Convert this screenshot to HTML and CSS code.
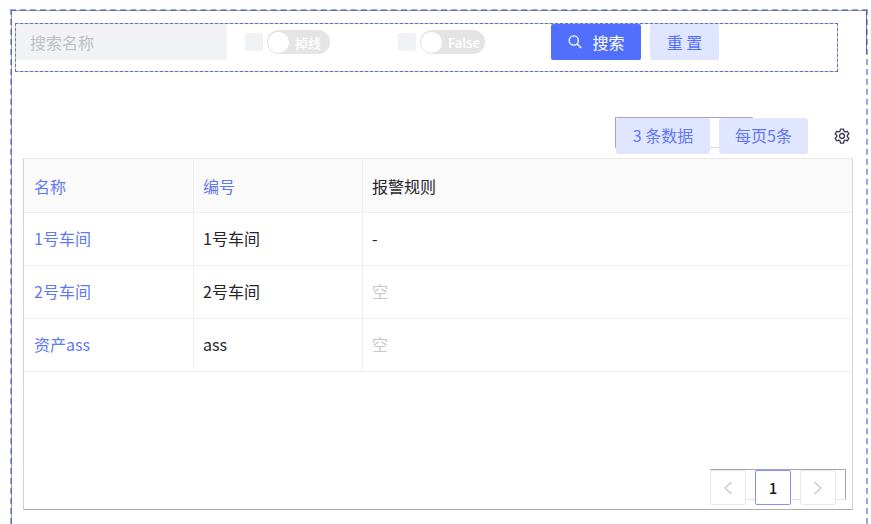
FILE: index.html
```html
<!DOCTYPE html>
<html lang="zh-CN">
<head>
    <meta charset="UTF-8">
    <title>资产列表</title>
    <link rel="stylesheet" href="styles.css">
</head>
<body>
    <div class="frame">
        <form class="filter">
            <input class="filter-input" type="text" placeholder="搜索名称">
            <div class="filter-toggle toggle-first">
                <span class="check"></span>
                <span class="switch"><i class="knob"></i><b>掉线</b></span>
            </div>
            <div class="filter-toggle toggle-second">
                <span class="check"></span>
                <span class="switch switch-wide"><i class="knob"></i><b>False</b></span>
            </div>
            <button class="btn btn-primary" type="button">
                <svg class="search-icon" viewBox="0 0 16 16" width="16" height="16">
                    <circle cx="6.8" cy="6.5" r="4.6" fill="none" stroke="#fff" stroke-width="1.3"/>
                    <path d="M10.2 10l4 4" fill="none" stroke="#fff" stroke-width="1.4"/>
                </svg>
                搜索
            </button>
            <button class="btn btn-light" type="button">重 置</button>
        </form>

        <div class="toolbar">
            <div class="chips">
                <span class="chip chip-count">3 条数据</span>
                <span class="chip chip-size">每页5条</span>
            </div>
            <svg class="gear" viewBox="0 0 24 24" width="18" height="18">
                <path d="M10 2.8h4l.6 2.8 1.8 1 2.7-.9 2 3.5-2.100 1.900v2l2.100 1.900-2 3.500-2.700-.9-1.800 1-.6 2.800h-4l-.6-2.800-1.800-1-2.700.9-2-3.500 2.100-1.900v-2L2.900 9.200l2-3.500 2.700.9 1.800-1z" fill="none" stroke="#3a3f55" stroke-width="1.800" stroke-linejoin="round"/>
                <circle cx="12" cy="12" r="3.300" fill="none" stroke="#3a3f55" stroke-width="1.800"/>
            </svg>
        </div>

        <div class="table-box">
            <table class="data-table" cellspacing="0">
                <thead>
                    <tr>
                        <th class="link">名称</th>
                        <th class="link">编号</th>
                        <th>报警规则</th>
                    </tr>
                </thead>
                <tbody>
                    <tr>
                        <td class="link">1号车间</td>
                        <td>1号车间</td>
                        <td>-</td>
                    </tr>
                    <tr>
                        <td class="link">2号车间</td>
                        <td>2号车间</td>
                        <td class="empty">空</td>
                    </tr>
                    <tr>
                        <td class="link">资产ass</td>
                        <td>ass</td>
                        <td class="empty">空</td>
                    </tr>
                </tbody>
            </table>
            <div class="pager">
                <span class="page-btn">
                    <svg viewBox="0 0 12 16" width="12" height="16"><path d="M9.500 2L3 8l6.500 6" fill="none" stroke="#c4c4c4" stroke-width="1.200"/></svg>
                </span>
                <span class="page-btn page-current">1</span>
                <span class="page-btn">
                    <svg viewBox="0 0 12 16" width="12" height="16"><path d="M2.500 2L9 8l-6.500 6" fill="none" stroke="#c4c4c4" stroke-width="1.200"/></svg>
                </span>
            </div>
        </div>
    </div>
</body>
</html>
```

FILE: styles.css
```css
*{
    margin: 0;
    padding: 0;
    box-sizing: border-box;
    font-family: 'Noto Sans CJK SC', sans-serif;
}

html, body{
    height: 524px;
    overflow: hidden;
    background-color: #fff;
}

.frame{
    position: relative;
    width: 858px;
    height: 515px;
    margin: 9px 0 0 10px;
    padding: 12px 0 0 3px;
    border: 2px dashed #9aa5e6;
    border-bottom: none;
}

/* the darker line under the dashes: top and left all along, right only near the top */
.frame::before{
    content: "";
    position: absolute;
    left: -1px;
    top: -1px;
    right: -1px;
    bottom: 0;
    border-top: 1px solid rgba(60, 70, 120, 0.55);
    border-left: 1px solid rgba(60, 70, 120, 0.55);
    pointer-events: none;
}

.frame::after{
    content: "";
    position: absolute;
    top: -1px;
    right: -1px;
    height: 44px;
    border-right: 1px solid rgba(60, 70, 120, 0.75);
    pointer-events: none;
}

/* filter row */
.filter{
    position: relative;
    display: flex;
    width: 823px;
    height: 49px;
    border: 1px dashed #5f6fd0;
    background: linear-gradient(#fff, #fff) padding-box, #c3caf2 border-box;
}

.filter-input{
    width: 211px;
    height: 36px;
    padding-left: 14px;
    font-size: 16px;
    background-color: #f0f2f5;
    border: none;
    border-radius: 2px;
}

.filter-input::placeholder{
    color: #bfbfbf;
}

.filter-toggle{
    display: flex;
    height: 24px;
    margin-top: 6px;
    align-items: center;
    gap: 4px;
}

.toggle-first{
    margin-left: 18px;
}

.toggle-second{
    margin-left: 68px;
}

.check{
    width: 18px;
    height: 18px;
    background-color: #f0f2f5;
    border-radius: 2px;
}

.switch{
    display: flex;
    align-items: center;
    width: 63px;
    height: 24px;
    padding-left: 1px;
    background-color: #e4e4e4;
    border-radius: 12px;
}

.switch-wide{
    width: 65px;
}

.switch b{
    margin-left: 6px;
    font-size: 13px;
    font-weight: 500;
    color: #fff;
}

.knob{
    width: 21px;
    height: 21px;
    background-color: #fff;
    border-radius: 50%;
}

.btn{
    height: 36px;
    font-size: 16px;
    border: none;
    border-radius: 2px;
    cursor: pointer;
}

.btn-primary{
    display: flex;
    align-items: center;
    justify-content: center;
    gap: 9px;
    width: 90px;
    margin-left: 66px;
    color: #fff;
    background-color: #4f6ffc;
}

.btn-light{
    width: 69px;
    margin-left: 9px;
    color: #4f6ffc;
    background-color: #e0e6ff;
}

/* toolbar above the table */
.toolbar{
    display: flex;
    justify-content: flex-end;
    align-items: center;
    width: 836px;
    height: 36px;
    margin-top: 46px;
}

.chips{
    position: relative;
    display: flex;
    gap: 9px;
    margin-right: 25px;
}

.chips::before{
    content: "";
    position: absolute;
    left: 0;
    top: -1px;
    width: 136px;
    height: 29px;
    border: 1px solid #d9d9d9;
    border-top-color: #a8a8a8;
    border-left-color: #a8a8a8;
}

.chip{
    position: relative;
    height: 36px;
    line-height: 35px;
    font-size: 16px;
    text-align: center;
    color: #5f78f5;
    background-color: #e0e6ff;
    border-radius: 3px;
}

.chip-count{
    width: 94px;
    margin-left: 1px;
}

.chip-size{
    width: 89px;
}

/* table */
.table-box{
    position: relative;
    width: 830px;
    height: 352px;
    margin-top: 4px;
    margin-left: 8px;
    border: 1px solid #d4d4d4;
    border-top-color: #e8e8e8;
    border-bottom-color: #aeaeae;
}

.data-table{
    width: 100%;
    table-layout: fixed;
    font-size: 16px;
    color: #26262c;
}

.data-table th{
    height: 54px;
    padding-left: 10px;
    text-align: left;
    font-weight: normal;
    background-color: #fafafa;
    border-right: 1px solid #f0f0f0;
    border-bottom: 1px solid #f0f0f0;
}

.data-table td{
    height: 53px;
    padding: 0 0 3px 10px;
    border-right: 1px solid #f0f0f0;
    border-bottom: 1px solid #f0f0f0;
}

.data-table th:nth-child(n+2),
.data-table td:nth-child(n+2){
    padding-left: 9px;
}

.data-table th:nth-child(1){
    width: 170px;
}

.data-table th:nth-child(2){
    width: 169px;
}

.data-table th:last-child,
.data-table td:last-child{
    border-right: none;
}

.data-table .link{
    color: #5f78f5;
}

.data-table .empty{
    color: #c8c8c8;
}

/* pager */
.pager{
    position: absolute;
    right: 16px;
    bottom: 4px;
    display: flex;
    gap: 9px;
}

.pager::before{
    content: "";
    position: absolute;
    left: 0;
    right: -10px;
    top: -1px;
    height: 29px;
    border: 1px solid #e4e4e4;
    border-top-color: #a8a8a8;
    border-right-color: #a8a8a8;
}

.page-btn{
    position: relative;
    display: flex;
    align-items: center;
    justify-content: center;
    width: 36px;
    height: 35px;
    font-size: 15px;
    font-weight: 500;
    color: #1a1a2e;
    background-color: #fff;
    border: 1px solid #e8e8e8;
    border-radius: 2px;
}

.page-current{
    border-color: #7d93f7;
}
```
